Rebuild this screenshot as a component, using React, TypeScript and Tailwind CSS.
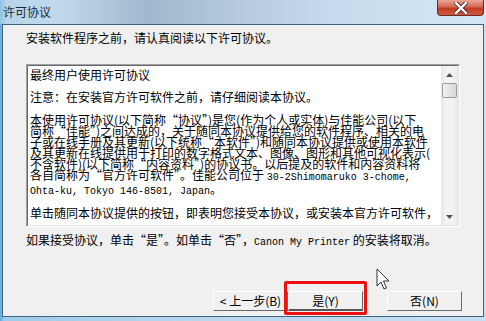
import React from "react";

const CJK = '"Noto Sans CJK SC", "Noto Sans", sans-serif';

function M({ children }: { children: React.ReactNode }) {
  return (
    <span className="font-['Liberation_Mono',monospace] text-[10px]">{children}</span>
  );
}

function Line({ children, cls = "" }: { children: React.ReactNode; cls?: string }) {
  return <div className={"whitespace-nowrap h-[11px] leading-[11px] " + cls}>{children}</div>;
}

function Btn({ children, isDefault = false, w = "w-[75px]" }: { children: React.ReactNode; isDefault?: boolean; w?: string }) {
  return (
    <div
      className={
        w +
        " h-[20px] bg-[#f0f0f0] flex items-center justify-center text-[12px] leading-[12px] text-black border-t border-l border-t-white border-l-white border-r border-r-[#696969] " +
        (isDefault ? "border-b-2 border-b-[#555]" : "border-b border-b-[#696969]")
      }
    >
      {children}
    </div>
  );
}

export default function App() {
  return (
    <div
      lang="zh-CN"
      className="w-[486px] h-[321px] relative overflow-hidden flex flex-col bg-[linear-gradient(to_right,#5fa8d8_0px,#9fcbe8_4px,#b9d6ec_40%,#c8dff1_100%)]"
      style={{ fontFamily: CJK }}
    >
      {/* title bar */}
      <div className="h-[24px] shrink-0 relative flex items-start bg-[linear-gradient(to_right,#8ec3e4_0px,#b7d4ea_6px,#c2d9ec_60px,#9fb8cd_150px,#b3c9db_230px,#c6dcee_330px,#d3e6f5_486px)]">
        <div className="pl-[3px] pt-[5px] text-[12px] leading-[13px] text-[#1a2a38]">许可协议</div>
        <div className="absolute left-[437px] top-0 w-[47px] h-[16px] rounded-b-[4px] border border-t-0 border-[#6b2a22] bg-[linear-gradient(to_bottom,#e8a596_0%,#d46a55_45%,#c13b22_55%,#cf5a3e_100%)] flex items-center justify-center">
          <svg width="14" height="12" viewBox="0 0 14 12">
            <path d="M2 1 L12 11 M12 1 L2 11" stroke="#3a2a2a" strokeWidth="4" strokeLinecap="square" />
            <path d="M2 1 L12 11 M12 1 L2 11" stroke="#fff" strokeWidth="2.4" strokeLinecap="square" />
          </svg>
        </div>
      </div>

      {/* client */}
      <div className="mx-[2px] mb-[4px] flex-1 border border-[#3f6483] bg-[#f0f0f0] flex flex-col text-black">
        <div className="pl-[23px] pt-[7px] text-[12px] leading-[12px] whitespace-nowrap">
          安装软件程序之前，请认真阅读以下许可协议。
        </div>

        {/* text box */}
        <div className="ml-[23px] mt-[20px] w-[434px] h-[163px] border-t border-l border-t-[#a0a0a0] border-l-[#a0a0a0] border-b border-r border-b-white border-r-white">
          <div className="w-full h-full border-t border-l border-t-[#696969] border-l-[#696969] border-b border-r border-b-[#e3e3e3] border-r-[#e3e3e3] bg-white flex">
            <div className="flex-1 pl-[2px] pt-[3px] text-[12px] overflow-hidden">
              <Line cls="h-[12px] leading-[12px]">最终用户使用许可协议</Line>
              <Line cls="h-[12px] leading-[12px] mt-[10px]">注意：在安装官方许可软件之前，请仔细阅读本协议。</Line>
              <div className="mt-[11px]">
                <Line>本使用许可协议(以下简称“协议”)是您(作为个人或实体)与佳能公司(以下</Line>
                <Line>简称“佳能”)之间达成的，关于随同本协议提供给您的软件程序、相关的电</Line>
                <Line>子或在线手册及其更新(以下统称“本软件”)和随同本协议提供或使用本软件</Line>
                <Line>及其更新在线提供用于打印的数字格式文本、图像、图形和其他可视化表示(</Line>
                <Line>不含软件)(以下简称“内容资料”)的协议书。以后提及的软件和内容资料将</Line>
                <Line>各自简称为“官方许可软件”。佳能公司位于 <M>30-2Shimomaruko 3-chome,</M></Line>
                <Line cls="mt-[3px]"><M>Ohta-ku, Tokyo 146-8501, Japan</M>。</Line>
              </div>
              <Line cls="h-[12px] leading-[12px] mt-[13px]">单击随同本协议提供的按钮，即表明您接受本协议，或安装本官方许可软件，</Line>
            </div>
            {/* scrollbar */}
            <div className="w-[17px] h-full bg-[linear-gradient(to_right,#e6e6e6,#f3f3f3_30%,#f3f3f3_70%,#e9e9e9)] flex flex-col items-center">
              <div className="h-[17px] w-full flex items-center justify-center">
                <svg width="7" height="4" viewBox="0 0 7 4"><path d="M3.5 0 L7 4 L0 4 Z" fill="#505050" /></svg>
              </div>
              <div className="w-[15px] h-[15px] rounded-[2px] border border-[#9b9b9b] bg-[linear-gradient(to_right,#f2f2f2,#e4e4e4_50%,#d7d7d7)]" />
              <div className="flex-1" />
              <div className="h-[17px] w-full flex items-center justify-center">
                <svg width="7" height="4" viewBox="0 0 7 4"><path d="M0 0 L7 0 L3.5 4 Z" fill="#505050" /></svg>
              </div>
            </div>
          </div>
        </div>

        <div className="pl-[23px] mt-[7px] text-[12px] leading-[12px] whitespace-nowrap">
          如果接受协议，单击“是”。如单击“否”，<M>Canon My Printer</M> 的安装将取消。
        </div>

        <div className="mt-[42px] flex pl-[210px]">
          <Btn>&lt; 上一步(B)</Btn>
          <Btn isDefault>是(Y)</Btn>
          <div className="w-[24px]" />
          <Btn>否(N)</Btn>
        </div>
      </div>

      {/* red highlight annotation */}
      <div className="absolute left-[284px] top-[281px] w-[83px] h-[34px] border-[3px] border-[#ee1111] rounded-[2px]" />

      {/* mouse cursor */}
      <svg className="absolute left-[376px] top-[268px]" width="16" height="24" viewBox="0 0 16 24">
        <path d="M1 1 L1 18 L5 14 L8 21 L10.5 20 L7.5 13 L13 13 Z" fill="#fff" stroke="#333" strokeWidth="1" strokeLinejoin="round" />
      </svg>
    </div>
  );
}
